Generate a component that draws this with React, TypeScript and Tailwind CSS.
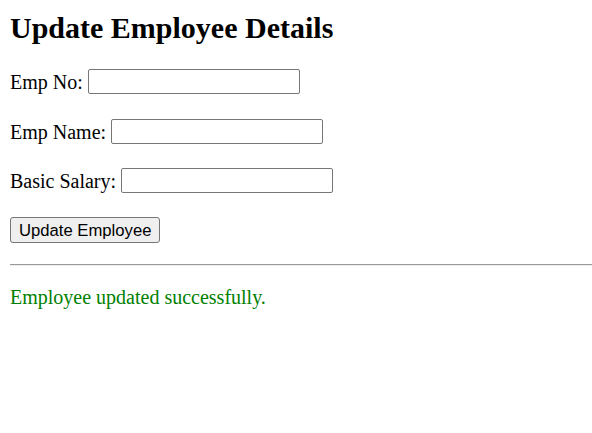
import React from 'react';

export default function App() {
    return (
        <div className="min-h-screen bg-white pl-[10px] pt-[10px] font-['Liberation_Serif',serif] text-[20px] text-black">
            <h2 className="h-[35px] text-[30px] font-bold leading-[35px]">Update Employee Details</h2>

            {/* Form rows */}
            <div className="mt-[24px] flex h-[25px] items-center">
                <label>Emp No:</label>
                <input type="text" className="ml-[5px] h-[25px] w-[212px] rounded-[2px] border border-[#767676] bg-white" />
            </div>
            <div className="mt-[25px] flex h-[25px] items-center">
                <label>Emp Name:</label>
                <input type="text" className="ml-[5px] h-[25px] w-[212px] rounded-[2px] border border-[#767676] bg-white" />
            </div>
            <div className="mt-[24px] flex h-[25px] items-center">
                <label>Basic Salary:</label>
                <input type="text" className="ml-[5px] h-[25px] w-[212px] rounded-[2px] border border-[#767676] bg-white" />
            </div>

            <button className="mt-[24px] block h-[26px] rounded-[3px] border border-[#767676] bg-[#efefef] px-[8px] font-['Liberation_Sans',Arial,sans-serif] text-[16.67px] leading-[25px] text-black">
                Update Employee
            </button>

            <hr className="mt-[21px] border-t border-b border-t-[#9a9a9a] border-b-[#eeeeee]" />

            <p className="mt-[20px] leading-[23px] text-[#008000]">Employee updated successfully.</p>
        </div>
    );
}
